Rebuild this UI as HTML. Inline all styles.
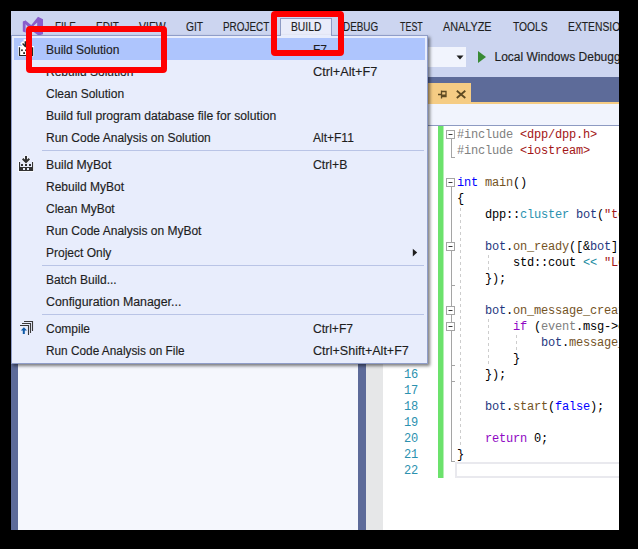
<!DOCTYPE html><html><head><meta charset="utf-8"><style>
*{margin:0;padding:0;box-sizing:border-box}
html,body{width:638px;height:549px;overflow:hidden;background:#000}
.ab{position:absolute}
.t{position:absolute;font-family:"Liberation Sans", sans-serif;font-size:12px;line-height:16px;white-space:nowrap;color:#1E1E1E;-webkit-text-stroke:0.15px currentColor}
.c{position:absolute;font-family:"Liberation Mono", monospace;font-size:12px;letter-spacing:-0.2px;line-height:16px;white-space:pre;color:#000}
.sx{display:inline-block;transform-origin:0 0}
</style></head><body>
<div class="ab" style="left:0;top:0;width:638px;height:549px;clip-path:inset(11px 19px 19px 11px)">
<div class="ab" style="left:11px;top:11px;width:608px;height:66px;background:#CCD5F0;"></div>
<div class="ab" style="left:11px;top:77px;width:7px;height:453px;background:#5D6B99;"></div>
<div class="ab" style="left:18px;top:77px;width:340px;height:453px;background:#F5F7FD;"></div>
<div class="ab" style="left:358px;top:77px;width:8px;height:453px;background:#5D6B99;"></div>
<div class="ab" style="left:366px;top:77px;width:253px;height:25px;background:#5D6B99;"></div>
<div class="ab" style="left:366px;top:102px;width:253px;height:2px;background:#F5CC84;"></div>
<div class="ab" style="left:380px;top:83px;width:91px;height:21px;background:#F5CC84;"></div>
<svg class="ab" style="left:430px;top:85px" width="45" height="18" viewBox="430 85 45 18"><g fill="none" stroke="#5E4A22" stroke-width="1.3"><path d="M438 94.5H442M441.5 90.5V98.5M441.5 91.5H446V96.5H441.5"/><rect x="442" y="94.5" width="4" height="2.2" fill="#5E4A22" stroke="none"/><path d="M456.8 90.8L465.3 98M465.3 90.8L456.8 98" stroke-width="1.8"/></g></svg>
<div class="ab" style="left:366px;top:104px;width:253px;height:21px;background:#F1F4FD;"></div>
<div class="ab" style="left:366px;top:125px;width:253px;height:1px;background:#8D9AC2;"></div>
<div class="ab" style="left:366px;top:126px;width:17px;height:404px;background:#E6E7E8;"></div>
<div class="ab" style="left:383px;top:126px;width:236px;height:404px;background:#FFFFFF;"></div>
<div class="ab" style="left:438px;top:126px;width:5px;height:352px;background:#6CE26C;"></div>
<div class="ab" style="left:443px;top:126px;width:1px;height:352px;background:#B5F0B5;"></div>
<div class="ab" style="left:455px;top:462px;width:185px;height:16px;background:transparent;border:2px solid #E9E9EE;border-right:none"></div>
<div class="c" style="left:390px;top:127px;width:28px;text-align:right;color:#2B91AF;font-size:12px;letter-spacing:-0.2px">1</div>
<div class="c" style="left:390px;top:143px;width:28px;text-align:right;color:#2B91AF;font-size:12px;letter-spacing:-0.2px">2</div>
<div class="c" style="left:390px;top:159px;width:28px;text-align:right;color:#2B91AF;font-size:12px;letter-spacing:-0.2px">3</div>
<div class="c" style="left:390px;top:175px;width:28px;text-align:right;color:#2B91AF;font-size:12px;letter-spacing:-0.2px">4</div>
<div class="c" style="left:390px;top:191px;width:28px;text-align:right;color:#2B91AF;font-size:12px;letter-spacing:-0.2px">5</div>
<div class="c" style="left:390px;top:207px;width:28px;text-align:right;color:#2B91AF;font-size:12px;letter-spacing:-0.2px">6</div>
<div class="c" style="left:390px;top:223px;width:28px;text-align:right;color:#2B91AF;font-size:12px;letter-spacing:-0.2px">7</div>
<div class="c" style="left:390px;top:239px;width:28px;text-align:right;color:#2B91AF;font-size:12px;letter-spacing:-0.2px">8</div>
<div class="c" style="left:390px;top:255px;width:28px;text-align:right;color:#2B91AF;font-size:12px;letter-spacing:-0.2px">9</div>
<div class="c" style="left:390px;top:271px;width:28px;text-align:right;color:#2B91AF;font-size:12px;letter-spacing:-0.2px">10</div>
<div class="c" style="left:390px;top:287px;width:28px;text-align:right;color:#2B91AF;font-size:12px;letter-spacing:-0.2px">11</div>
<div class="c" style="left:390px;top:303px;width:28px;text-align:right;color:#2B91AF;font-size:12px;letter-spacing:-0.2px">12</div>
<div class="c" style="left:390px;top:319px;width:28px;text-align:right;color:#2B91AF;font-size:12px;letter-spacing:-0.2px">13</div>
<div class="c" style="left:390px;top:335px;width:28px;text-align:right;color:#2B91AF;font-size:12px;letter-spacing:-0.2px">14</div>
<div class="c" style="left:390px;top:351px;width:28px;text-align:right;color:#2B91AF;font-size:12px;letter-spacing:-0.2px">15</div>
<div class="c" style="left:390px;top:367px;width:28px;text-align:right;color:#2B91AF;font-size:12px;letter-spacing:-0.2px">16</div>
<div class="c" style="left:390px;top:383px;width:28px;text-align:right;color:#2B91AF;font-size:12px;letter-spacing:-0.2px">17</div>
<div class="c" style="left:390px;top:399px;width:28px;text-align:right;color:#2B91AF;font-size:12px;letter-spacing:-0.2px">18</div>
<div class="c" style="left:390px;top:415px;width:28px;text-align:right;color:#2B91AF;font-size:12px;letter-spacing:-0.2px">19</div>
<div class="c" style="left:390px;top:431px;width:28px;text-align:right;color:#2B91AF;font-size:12px;letter-spacing:-0.2px">20</div>
<div class="c" style="left:390px;top:447px;width:28px;text-align:right;color:#2B91AF;font-size:12px;letter-spacing:-0.2px">21</div>
<div class="c" style="left:390px;top:463px;width:28px;text-align:right;color:#2B91AF;font-size:12px;letter-spacing:-0.2px">22</div>
<svg class="ab" style="left:440px;top:126px" width="180" height="352" viewBox="440 126 180 352"><rect x="446.5" y="130.5" width="8" height="8" fill="#fff" stroke="#A5A5A5"/><path d="M448.5 134.5H452.5" stroke="#3C3C3C" stroke-width="1"/><path d="M451.5 139V158" stroke="#A5A5A5"/><path d="M451 157.5H455" stroke="#A5A5A5"/><rect x="446.5" y="178.5" width="8" height="8" fill="#fff" stroke="#A5A5A5"/><path d="M448.5 182.5H452.5" stroke="#3C3C3C" stroke-width="1"/><path d="M451.5 187V462" stroke="#A5A5A5"/><path d="M451 461.5H455" stroke="#A5A5A5"/><rect x="446.5" y="242.5" width="8" height="8" fill="#fff" stroke="#A5A5A5"/><path d="M448.5 246.5H452.5" stroke="#3C3C3C" stroke-width="1"/><path d="M451 285.5H455" stroke="#A5A5A5"/><rect x="446.5" y="306.5" width="8" height="8" fill="#fff" stroke="#A5A5A5"/><path d="M448.5 310.5H452.5" stroke="#3C3C3C" stroke-width="1"/><rect x="446.5" y="322.5" width="8" height="8" fill="#fff" stroke="#A5A5A5"/><path d="M448.5 326.5H452.5" stroke="#3C3C3C" stroke-width="1"/><path d="M451 365.5H455" stroke="#A5A5A5"/><path d="M451 381.5H455" stroke="#A5A5A5"/><path d="M460.5 208V446" stroke="#CDCDCD" stroke-dasharray="3,3"/><path d="M488.5 255V270" stroke="#CDCDCD" stroke-dasharray="3,3"/><path d="M488.5 319V366" stroke="#CDCDCD" stroke-dasharray="3,3"/><path d="M516.5 335V350" stroke="#CDCDCD" stroke-dasharray="3,3"/></svg>
<div class="c" style="left:457px;top:127px"><span style="color:#808080">#include</span><span style="color:#000"> </span><span style="color:#A31515">&lt;dpp/dpp.h&gt;</span></div>
<div class="c" style="left:457px;top:143px"><span style="color:#808080">#include</span><span style="color:#000"> </span><span style="color:#A31515">&lt;iostream&gt;</span></div>
<div class="c" style="left:457px;top:175px"><span style="color:#0000FF">int</span><span style="color:#000"> </span><span style="color:#74531F">main</span><span style="color:#000">()</span></div>
<div class="c" style="left:457px;top:191px"><span style="color:#000">{</span></div>
<div class="c" style="left:457px;top:207px"><span style="color:#000">    dpp::</span><span style="color:#2B91AF">cluster</span><span style="color:#000"> </span><span style="color:#1F377F">bot</span><span style="color:#000">(</span><span style="color:#A31515">"token"</span><span style="color:#000">);</span></div>
<div class="c" style="left:457px;top:239px"><span style="color:#000">    </span><span style="color:#1F377F">bot</span><span style="color:#000">.</span><span style="color:#74531F">on_ready</span><span style="color:#000">([&amp;</span><span style="color:#1F377F">bot</span><span style="color:#000">](</span><span style="color:#0000FF">const</span><span style="color:#000"> dpp::</span><span style="color:#2B91AF">ready_t</span></div>
<div class="c" style="left:457px;top:255px"><span style="color:#000">        std::cout </span><span style="color:#1A8AA0">&lt;&lt;</span><span style="color:#000"> </span><span style="color:#A31515">"Logged in"</span></div>
<div class="c" style="left:457px;top:271px"><span style="color:#000">    });</span></div>
<div class="c" style="left:457px;top:303px"><span style="color:#000">    </span><span style="color:#1F377F">bot</span><span style="color:#000">.</span><span style="color:#74531F">on_message_create</span><span style="color:#000">(</span></div>
<div class="c" style="left:457px;top:319px"><span style="color:#000">        </span><span style="color:#8F08C4">if</span><span style="color:#000"> (</span><span style="color:#808080">event</span><span style="color:#000">.msg-&gt;content</span></div>
<div class="c" style="left:457px;top:335px"><span style="color:#000">            </span><span style="color:#1F377F">bot</span><span style="color:#000">.</span><span style="color:#74531F">message_create</span><span style="color:#000">(</span></div>
<div class="c" style="left:457px;top:351px"><span style="color:#000">        }</span></div>
<div class="c" style="left:457px;top:367px"><span style="color:#000">    });</span></div>
<div class="c" style="left:457px;top:399px"><span style="color:#000">    </span><span style="color:#1F377F">bot</span><span style="color:#000">.</span><span style="color:#74531F">start</span><span style="color:#000">(</span><span style="color:#0000FF">false</span><span style="color:#000">);</span></div>
<div class="c" style="left:457px;top:431px"><span style="color:#000">    </span><span style="color:#8F08C4">return</span><span style="color:#000"> 0;</span></div>
<div class="c" style="left:457px;top:447px"><span style="color:#000">}</span></div>
<svg class="ab" style="left:18px;top:14px" width="30" height="24" viewBox="18 14 30 24"><g fill="#8A5DCB"><path d="M22.8 21.8L25.6 20.6L25.6 32.6L22.8 31.6Z"/><path d="M22.8 21.8L25.6 20.6L33.5 27L31.2 29.5Z"/><path d="M30.5 26L38 16.8L43 19.2V34.2L38.5 35.6L30.5 29.8Z"/><path d="M25.6 30.5L31.5 27.5L32.5 29.5L25.6 32.6Z"/></g><path d="M37.2 22.5V27.8L33.6 25.8Z" fill="#CCD5F0"/></svg>
<div class="ab" style="left:280px;top:18px;width:52px;height:18px;background:#E9ECFA;border:1px solid #8E9BC4;border-bottom:none"></div>
<div class="t" style="left:55.0px;top:19px;color:#1E1E1E;font-size:12px"><span class="sx" style="transform:scaleX(0.828)">FILE</span></div>
<div class="t" style="left:96.4px;top:19px;color:#1E1E1E;font-size:12px"><span class="sx" style="transform:scaleX(0.836)">EDIT</span></div>
<div class="t" style="left:139.0px;top:19px;color:#1E1E1E;font-size:12px"><span class="sx" style="transform:scaleX(0.871)">VIEW</span></div>
<div class="t" style="left:186.0px;top:19px;color:#1E1E1E;font-size:12px"><span class="sx" style="transform:scaleX(0.857)">GIT</span></div>
<div class="t" style="left:223.0px;top:19px;color:#1E1E1E;font-size:12px"><span class="sx" style="transform:scaleX(0.825)">PROJECT</span></div>
<div class="t" style="left:290.5px;top:19px;color:#1E1E1E;font-size:12px"><span class="sx" style="transform:scaleX(0.858)">BUILD</span></div>
<div class="t" style="left:343.0px;top:19px;color:#1E1E1E;font-size:12px"><span class="sx" style="transform:scaleX(0.823)">DEBUG</span></div>
<div class="t" style="left:399.6px;top:19px;color:#1E1E1E;font-size:12px"><span class="sx" style="transform:scaleX(0.742)">TEST</span></div>
<div class="t" style="left:443.3px;top:19px;color:#1E1E1E;font-size:12px"><span class="sx" style="transform:scaleX(0.902)">ANALYZE</span></div>
<div class="t" style="left:513.4px;top:19px;color:#1E1E1E;font-size:12px"><span class="sx" style="transform:scaleX(0.858)">TOOLS</span></div>
<div class="t" style="left:568.4px;top:19px;color:#1E1E1E;font-size:12px"><span class="sx" style="transform:scaleX(0.86)">EXTENSIONS</span></div>
<div class="ab" style="left:380px;top:47px;width:86px;height:20px;background:#F1F4FD;"></div>
<svg class="ab" style="left:450px;top:48px" width="45" height="18" viewBox="450 48 45 18"><path d="M456.5 55.5H463.5L460 59.5Z" fill="#1E1E1E"/><path d="M478 51L486 57L478 63Z" fill="#388A34"/></svg>
<div class="t" style="left:494.5px;top:49px;color:#1E1E1E;font-size:12px">Local Windows Debugger</div>
<div class="ab" style="left:11px;top:35px;width:417px;height:329px;box-shadow:2px 2px 3px rgba(0,0,0,0.5)"></div>
<div class="ab" style="left:11px;top:35px;width:417px;height:329px;background:#E8EDFC;border:1px solid #8F9DC9"></div>
<div class="ab" style="left:281px;top:35px;width:50px;height:1px;background:#E8EDFC;"></div>
<div class="ab" style="left:14px;top:38px;width:411px;height:22px;background:#AEC5FD;"></div>
<div class="t" style="left:46px;top:42px;color:#1E1E1E;font-size:12px">Build Solution</div>
<div class="t" style="left:313px;top:42px;color:#1E1E1E;font-size:12px">F7</div>
<div class="t" style="left:46px;top:64px;color:#1E1E1E;font-size:12px">Rebuild Solution</div>
<div class="t" style="left:313px;top:64px;color:#1E1E1E;font-size:12px"><span class="sx" style="transform:scaleX(1.06)">Ctrl+Alt+F7</span></div>
<div class="t" style="left:46px;top:86px;color:#1E1E1E;font-size:12px">Clean Solution</div>
<div class="t" style="left:46px;top:108px;color:#1E1E1E;font-size:12px"><span class="sx" style="transform:scaleX(1.015)">Build full program database file for solution</span></div>
<div class="t" style="left:46px;top:130px;color:#1E1E1E;font-size:12px">Run Code Analysis on Solution</div>
<div class="t" style="left:313px;top:130px;color:#1E1E1E;font-size:12px">Alt+F11</div>
<div class="ab" style="left:42px;top:150px;width:382px;height:1px;background:#B9C4E6;"></div>
<div class="t" style="left:46px;top:157px;color:#1E1E1E;font-size:12px"><span class="sx" style="transform:scaleX(1.02)">Build MyBot</span></div>
<div class="t" style="left:313px;top:157px;color:#1E1E1E;font-size:12px"><span class="sx" style="transform:scaleX(1.02)">Ctrl+B</span></div>
<div class="t" style="left:46px;top:179px;color:#1E1E1E;font-size:12px">Rebuild MyBot</div>
<div class="t" style="left:46px;top:201px;color:#1E1E1E;font-size:12px">Clean MyBot</div>
<div class="t" style="left:46px;top:223px;color:#1E1E1E;font-size:12px">Run Code Analysis on MyBot</div>
<div class="t" style="left:46px;top:245px;color:#1E1E1E;font-size:12px">Project Only</div>
<svg class="ab" style="left:410px;top:247px" width="10" height="10" viewBox="0 0 10 10"><path d="M2.8 1.7L7.2 5.55L2.8 9.4Z" fill="#1E1E1E"/></svg>
<div class="ab" style="left:42px;top:265px;width:382px;height:1px;background:#B9C4E6;"></div>
<div class="t" style="left:46px;top:272px;color:#1E1E1E;font-size:12px">Batch Build...</div>
<div class="t" style="left:46px;top:294px;color:#1E1E1E;font-size:12px"><span class="sx" style="transform:scaleX(1.03)">Configuration Manager...</span></div>
<div class="ab" style="left:42px;top:314px;width:382px;height:1px;background:#B9C4E6;"></div>
<div class="t" style="left:46px;top:321px;color:#1E1E1E;font-size:12px">Compile</div>
<div class="t" style="left:313px;top:321px;color:#1E1E1E;font-size:12px"><span class="sx" style="transform:scaleX(1.01)">Ctrl+F7</span></div>
<div class="t" style="left:46px;top:343px;color:#1E1E1E;font-size:12px"><span class="sx" style="transform:scaleX(0.985)">Run Code Analysis on File</span></div>
<div class="t" style="left:313px;top:343px;color:#1E1E1E;font-size:12px"><span class="sx" style="transform:scaleX(1.045)">Ctrl+Shift+Alt+F7</span></div>
<svg class="ab" style="left:16px;top:39px" width="20" height="20" viewBox="16 39 20 20"><rect x="18.2" y="46" width="15.8" height="10.2" fill="#fff"/><path d="M25.3 41V46.6M22.6 43.6L25.3 46.6L28 43.6" fill="none" stroke="#fff" stroke-width="3.4" stroke-linecap="square"/><path d="M19.5 47.2V55.5H32.6V47.2" fill="none" stroke="#262626" stroke-width="1.2"/><path d="M25.3 41.3V46.3M22.6 43.6L25.3 46.5L28 43.6" fill="none" stroke="#262626" stroke-width="1.4"/><rect x="21.1" y="49.4" width="1.7" height="1.7" fill="#262626"/><rect x="25.1" y="49.4" width="1.7" height="1.7" fill="#262626"/><rect x="23.2" y="52.2" width="1.8" height="1.8" fill="#262626"/><rect x="29" y="49.4" width="1.7" height="1.7" fill="#262626"/></svg>
<svg class="ab" style="left:16px;top:153px" width="20" height="20" viewBox="16 153 20 20"><path d="M19 161.5V171H33V161.5" fill="none" stroke="#fff" stroke-width="2" opacity="0.7"/><path d="M26 155.5V162M22.5 158.5L26 162L29.5 158.5" fill="none" stroke="#fff" stroke-width="3.6" opacity="0.7"/><rect x="19" y="162" width="1.1" height="9" fill="#333"/><rect x="32" y="162" width="1.1" height="9" fill="#333"/><rect x="21" y="164" width="2" height="2" fill="#333"/><rect x="25" y="164" width="2" height="2" fill="#333"/><rect x="29" y="164" width="2" height="2" fill="#333"/><path d="M19 167H33V171H19Z M23 168V170H25V168Z M27 168V170H29V168Z" fill="#333" fill-rule="evenodd"/><path d="M26 156V161.5M22.7 158.7L26 162L29.3 158.7" fill="none" stroke="#333" stroke-width="2"/></svg>
<svg class="ab" style="left:16px;top:317px" width="20" height="20" viewBox="16 317 20 20"><path d="M24 321.5H32.5V331M22 323.5H30.5V333M20 325.5H28.5V335" fill="none" stroke="#3A3A3A" stroke-width="1.1"/><path d="M23.9 327.2L27 330.6H24.8V334H22.8V330.6H20.8Z" fill="#0F5AA8"/></svg>
</div>
<div class="ab" style="left:26px;top:26px;width:141px;height:47px;border:6px solid #FF0000;border-radius:4px"></div>
<div class="ab" style="left:271px;top:11px;width:73px;height:45px;border:6.5px solid #FF0000;border-radius:4px"></div>
</body></html>
